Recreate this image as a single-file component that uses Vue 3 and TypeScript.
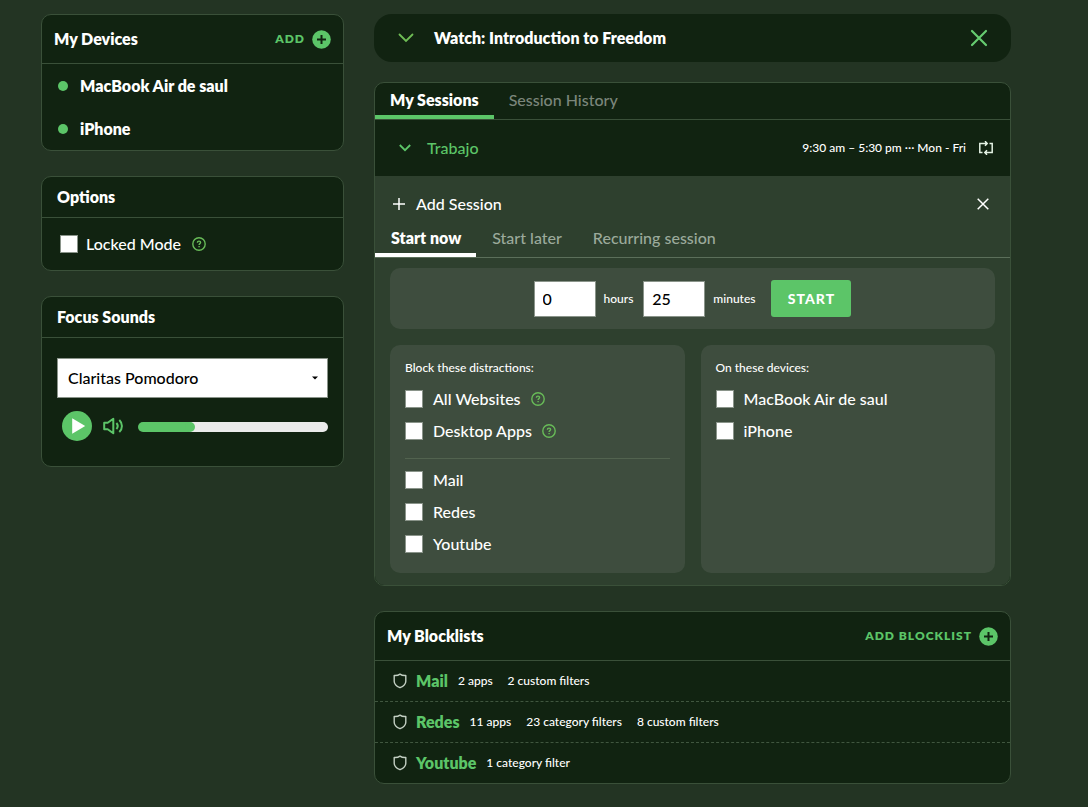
<script setup lang="ts">
import { computed, ref } from 'vue'

interface Choice {
  id: string
  label: string
  help?: boolean
}

interface Blocklist {
  name: string
  details: string[]
}

const devices: Choice[] = [
  { id: 'macbook', label: 'MacBook Air de saul' },
  { id: 'iphone', label: 'iPhone' },
]

const generalBlocks: Choice[] = [
  { id: 'websites', label: 'All Websites', help: true },
  { id: 'apps', label: 'Desktop Apps', help: true },
]

const listBlocks: Choice[] = [
  { id: 'mail', label: 'Mail' },
  { id: 'redes', label: 'Redes' },
  { id: 'youtube', label: 'Youtube' },
]

const blocklists: Blocklist[] = [
  { name: 'Mail', details: ['2 apps', '2 custom filters'] },
  { name: 'Redes', details: ['11 apps', '23 category filters', '8 custom filters'] },
  { name: 'Youtube', details: ['1 category filter'] },
]

const mainTabs = ['My Sessions', 'Session History']
const startTabs = ['Start now', 'Start later', 'Recurring session']
const mainTab = ref('My Sessions')
const startTab = ref('Start now')

const locked = ref(false)
const blocked = ref<string[]>([])
const targets = ref<string[]>([])
const sound = ref('Claritas Pomodoro')
const hours = ref('0')
const minutes = ref('25')
const volume = ref(26)
const volumeFill = computed(() => ({ '--level': volume.value / 100 }))
</script>

<template>
  <div class="page">
    <aside class="column">
      <section class="card">
        <header class="card-head tall">
          <h2>My Devices</h2>
          <button class="add" type="button">
            ADD
            <svg width="19" height="19" viewBox="0 0 19 19" aria-hidden="true">
              <circle cx="9.5" cy="9.5" r="9.3" fill="#5cc568" />
              <path d="M9.5 5v9M5 9.5h9" stroke="#112311" stroke-width="2" />
            </svg>
          </button>
        </header>
        <ul class="devices">
          <li v-for="device in devices" :key="device.id"><span class="dot"></span>{{ device.label }}</li>
        </ul>
      </section>

      <section class="card">
        <header class="card-head"><h2>Options</h2></header>
        <div class="locked">
          <label><input v-model="locked" type="checkbox" class="check" />Locked Mode</label>
          <button class="icon-button" type="button" aria-label="About Locked Mode">
            <svg class="help" width="14" height="14" viewBox="0 0 14 14" aria-hidden="true">
              <circle cx="7" cy="7" r="6.2" />
              <path d="M5.4 5.7c0-1 .7-1.600 1.600-1.600s1.600.6 1.600 1.400c0 1.100-1.500 1.200-1.500 2.400M7.100 9v1.200" />
            </svg>
          </button>
        </div>
      </section>

      <section class="card">
        <header class="card-head"><h2>Focus Sounds</h2></header>
        <div class="sounds">
          <div class="select-wrap">
            <select v-model="sound" aria-label="Focus sound">
              <option>Claritas Pomodoro</option>
            </select>
            <svg class="caret" width="6" height="4" viewBox="0 0 6 4" aria-hidden="true">
              <path d="M0 .4h6L3 3.6z" fill="#000" />
            </svg>
          </div>
          <div class="player">
            <button class="icon-button" type="button" aria-label="Play">
              <svg width="30" height="30" viewBox="0 0 30 30" aria-hidden="true">
                <circle cx="15" cy="15" r="15" fill="#5cc568" />
                <path d="M10.2 7.3v15.4L23.2 15z" fill="#fff" />
              </svg>
            </button>
            <button class="icon-button speaker" type="button" aria-label="Mute">
              <svg width="21" height="18" viewBox="0 0 21 18" fill="none" stroke="#5cc568" stroke-width="2" aria-hidden="true">
                <path d="M1.200 5.800h3.500L10.300 1.800v14.400l-5.600-4H1.200z" stroke-linejoin="round" />
                <path d="M13.400 6c1.500 1.700 1.500 4.300 0 6M16.300 3c3.500 3.300 3.500 8.700 0 12" />
              </svg>
            </button>
            <input v-model.number="volume" class="volume" type="range" min="0" max="100" aria-label="Volume" :style="volumeFill" />
          </div>
        </div>
      </section>
    </aside>

    <main class="column">
      <section class="banner">
        <button class="icon-button" type="button" aria-label="Expand video">
          <svg width="16" height="10" viewBox="0 0 16 10" aria-hidden="true">
            <path d="M1.500 1.500 8 8l6.500-6.500" fill="none" stroke="#6fbd55" stroke-width="1.8" stroke-linecap="round" />
          </svg>
        </button>
        <h2>Watch: Introduction to Freedom</h2>
        <button class="icon-button" type="button" aria-label="Dismiss video">
          <svg width="18" height="18" viewBox="0 0 18 18" aria-hidden="true">
            <path d="m2 2 14 14M16 2 2 16" fill="none" stroke="#66cc70" stroke-width="2.2" stroke-linecap="round" />
          </svg>
        </button>
      </section>

      <section class="card">
        <nav class="tabs main-tabs" aria-label="Sessions">
          <button v-for="tab in mainTabs" :key="tab" type="button" :class="{ active: tab === mainTab }" @click="mainTab = tab">
            {{ tab }}
          </button>
        </nav>
        <div class="session">
          <button class="session-name" type="button">
            <svg width="12" height="8" viewBox="0 0 12 8" aria-hidden="true">
              <path d="m.8 1 5.200 5.200L11.200 1" fill="none" stroke="#5cc568" stroke-width="1.8" />
            </svg>
            Trabajo
          </button>
          <span class="session-time">9:30 am – 5:30 pm ··· Mon - Fri</span>
          <svg width="14" height="14" viewBox="0 0 14 14" aria-hidden="true">
            <path
              d="M3.500 11.500H.8v-9h6.700M10.500 2.500h2.700v9H6.500M6 .2l2.200 2.300L6 4.800M8 9.200l-2.200 2.300L8 13.800"
              fill="none"
              stroke="#e4f2e4"
              stroke-width="1.5"
            />
          </svg>
        </div>

        <div class="add-panel">
          <header class="add-head">
            <svg width="12" height="12" viewBox="0 0 12 12" aria-hidden="true">
              <path d="M6 0v12M0 6h12" stroke="#fff" stroke-width="1.5" />
            </svg>
            <h3>Add Session</h3>
            <button class="icon-button" type="button" aria-label="Close">
              <svg width="12" height="12" viewBox="0 0 12 12" aria-hidden="true">
                <path d="m.7.7 10.600 10.600M11.300.7.7 11.300" stroke="#fff" stroke-width="1.5" />
              </svg>
            </button>
          </header>
          <nav class="tabs start-tabs" aria-label="Session type">
            <button v-for="tab in startTabs" :key="tab" type="button" :class="{ active: tab === startTab }" @click="startTab = tab">
              {{ tab }}
            </button>
          </nav>

          <form class="add-body" @submit.prevent>
            <div class="box duration">
              <input id="hours" v-model="hours" type="text" inputmode="numeric" />
              <label for="hours">hours</label>
              <input id="minutes" v-model="minutes" type="text" inputmode="numeric" />
              <label for="minutes">minutes</label>
              <button class="start" type="submit">START</button>
            </div>
            <fieldset class="box">
              <p>Block these distractions:</p>
              <div v-for="item in generalBlocks" :key="item.id" class="choice">
                <label><input v-model="blocked" type="checkbox" class="check" :value="item.id" />{{ item.label }}</label>
                <button v-if="item.help" class="icon-button" type="button" :aria-label="`About ${item.label}`">
                  <svg class="help" width="14" height="14" viewBox="0 0 14 14" aria-hidden="true">
                    <circle cx="7" cy="7" r="6.2" />
                    <path d="M5.4 5.700c0-1 .7-1.600 1.600-1.600s1.600.6 1.600 1.400c0 1.100-1.500 1.200-1.500 2.400M7.100 9v1.200" />
                  </svg>
                </button>
              </div>
              <hr />
              <div v-for="item in listBlocks" :key="item.id" class="choice">
                <label><input v-model="blocked" type="checkbox" class="check" :value="item.id" />{{ item.label }}</label>
              </div>
            </fieldset>
            <fieldset class="box">
              <p>On these devices:</p>
              <div v-for="item in devices" :key="item.id" class="choice">
                <label><input v-model="targets" type="checkbox" class="check" :value="item.id" />{{ item.label }}</label>
              </div>
            </fieldset>
          </form>
        </div>
      </section>

      <section class="card">
        <header class="card-head tall">
          <h2>My Blocklists</h2>
          <button class="add" type="button">
            ADD BLOCKLIST
            <svg width="19" height="19" viewBox="0 0 19 19" aria-hidden="true">
              <circle cx="9.5" cy="9.5" r="9.3" fill="#5cc568" />
              <path d="M9.5 5v9M5 9.5h9" stroke="#112311" stroke-width="2" />
            </svg>
          </button>
        </header>
        <ul class="blocklists">
          <li v-for="list in blocklists" :key="list.name">
            <svg width="14" height="16" viewBox="0 0 14 16" aria-hidden="true">
              <path
                d="M7 1.100C5.400 2.300 3.400 2.700 1.200 2.500v5.700c0 3 2.200 5 5.800 6.500 3.600-1.500 5.800-3.500 5.800-6.500V2.500C10.600 2.700 8.600 2.300 7 1.100z"
                fill="none"
                stroke="#c3cfc3"
                stroke-width="1.4"
                stroke-linejoin="round"
              />
            </svg>
            <a href="#">{{ list.name }}</a>
            <span v-for="detail in list.details" :key="detail">{{ detail }}</span>
          </li>
        </ul>
      </section>
    </main>
  </div>
</template>

<style>
body {
  margin: 0;
  background: #233423;
}
</style>

<style scoped>
.page {
  display: grid;
  grid-template-columns: 303px minmax(0, 1fr);
  gap: 30px;
  align-items: start;
  padding: 14px 77px 23px 41px;
  color: #fff;
  font: 500 16px/20px Lato, 'Liberation Sans', sans-serif;
}

.page *,
.page *::before {
  box-sizing: border-box;
}

.column {
  display: grid;
  gap: 25px;
}

main.column {
  grid-template-columns: minmax(0, 1fr);
}

h2,
h3,
p,
ul,
fieldset {
  margin: 0;
  padding: 0;
  border: 0;
  font-size: 16px;
  list-style: none;
}

h2 {
  font-weight: 800;
}

h3 {
  font-weight: 500;
}

button {
  padding: 0;
  border: 0;
  background: none;
  color: inherit;
  font: inherit;
  cursor: pointer;
}

svg {
  flex: none;
  display: block;
}

.icon-button {
  display: flex;
}

.card {
  overflow: hidden;
  border: 1px solid #3a5039;
  border-radius: 10px;
  background: #112311;
}

.card-head {
  display: flex;
  align-items: center;
  justify-content: space-between;
  height: 41px;
  padding: 0 15px;
  border-bottom: 1px solid #3a5039;
}

.card-head.tall {
  height: 49px;
  padding: 0 12px;
}

.add {
  display: flex;
  align-items: center;
  gap: 7px;
  color: #5cc568;
  font-size: 12px;
  font-weight: 800;
  letter-spacing: 1px;
}

.devices li {
  display: flex;
  align-items: center;
  gap: 12px;
  height: 43px;
  padding: 0 16px;
  font-weight: 800;
}

.dot {
  width: 10px;
  height: 10px;
  border-radius: 50%;
  background: #5cc568;
}

.locked {
  display: flex;
  align-items: center;
  gap: 11px;
  height: 52px;
  padding: 0 18px;
}

.locked label {
  display: flex;
  align-items: center;
  gap: 8px;
}

.check {
  appearance: none;
  flex: none;
  width: 18px;
  height: 18px;
  margin: 0;
  border: 1px solid #8a948a;
  background: #fff;
}

.check:checked {
  background: #5cc568;
}

.help {
  fill: none;
  stroke: #68bb58;
  stroke-width: 1.4;
}

.sounds {
  padding: 20px 15px 25px;
}

.select-wrap {
  position: relative;
}

select {
  appearance: none;
  display: block;
  width: 100%;
  height: 40px;
  padding: 0 10px;
  border: 1px solid #8a948a;
  border-radius: 0;
  background: #fff;
  color: #000;
  font: inherit;
}

.caret {
  position: absolute;
  top: 18px;
  right: 10px;
  pointer-events: none;
}

.player {
  display: flex;
  align-items: center;
  margin: 13px 0 0 5px;
}

.speaker {
  margin: 0 14px 0 11px;
}

.volume {
  appearance: none;
  flex: 1;
  min-width: 0;
  height: 10px;
  margin: 2px 0 0;
  border-radius: 5px;
  background: linear-gradient(#5cc568, #5cc568) 0 / calc(5px + var(--level) * (100% - 10px)) 100% no-repeat #ebebeb;
}

.volume::-webkit-slider-thumb {
  appearance: none;
  width: 10px;
  height: 10px;
  border-radius: 50%;
  background: #5cc568;
}

.banner {
  display: flex;
  align-items: center;
  height: 48px;
  margin-bottom: -5px;
  padding: 0 23px 0 24px;
  border-radius: 18px;
  background: #112311;
}

.banner h2 {
  flex: 1;
  padding-left: 20px;
}

.tabs {
  display: flex;
  border-bottom: 1px solid #3a5039;
}

.tabs button {
  border-bottom: 4px solid transparent;
  color: #7b867b;
}

.tabs button.active {
  border-color: #5cc568;
  color: #fff;
  font-weight: 800;
}

.main-tabs {
  height: 37px;
}

.main-tabs button {
  padding: 2px 15px 0;
}

.session {
  display: flex;
  align-items: center;
  justify-content: space-between;
  height: 56px;
  padding: 0 17px 0 24px;
}

.session-name {
  display: flex;
  align-items: center;
  gap: 16px;
  color: #5cc568;
}

.session-time {
  margin: 0 13px 0 auto;
  font-size: 12px;
}

.add-panel {
  background: #2e402e;
}

.add-head {
  display: flex;
  align-items: center;
  gap: 11px;
  height: 44px;
  padding: 12px 21px 0 18px;
}

.add-head h3 {
  flex: 1;
}

.start-tabs {
  height: 38px;
  border-color: #5b6f5a;
}

.start-tabs button {
  padding: 2px 15px 0 16px;
  color: #9baa9b;
}

.start-tabs button.active {
  border-color: #fff;
}

.add-body {
  display: grid;
  grid-template-columns: repeat(2, minmax(0, 1fr));
  gap: 16px;
  padding: 10px 15px 12px;
}

.box {
  min-width: 0;
  padding: 15px 15px 13px;
  border-radius: 10px;
  background: #3e4d3e;
}

.box.duration {
  grid-column: 1 / -1;
  display: flex;
  align-items: center;
  justify-content: center;
  gap: 8px;
  padding: 12px;
  font-size: 12px;
}

.duration input {
  width: 62px;
  height: 36px;
  padding: 0 8px;
  border: 1px solid #8a948a;
  background: #fff;
  color: #000;
  font: 500 16px/20px Lato, 'Liberation Sans', sans-serif;
}

.duration label:first-of-type {
  margin-right: 2px;
}

.start {
  width: 80px;
  height: 37px;
  margin-left: 8px;
  border-radius: 3px;
  background: #5cc568;
  font-size: 14px;
  font-weight: 900;
  letter-spacing: 1px;
}

.box p {
  margin-bottom: 7px;
  font-size: 12px;
  line-height: 16px;
}

.choice {
  display: flex;
  align-items: center;
  gap: 10px;
  height: 32px;
}

.choice label {
  display: flex;
  align-items: center;
  gap: 10px;
}

hr {
  height: 1px;
  margin: 11px 0 5px;
  border: 0;
  background: #52634f;
}

.blocklists li {
  display: flex;
  align-items: center;
  height: 41px;
  padding: 0 18px;
}

.blocklists li + li {
  border-top: 1px dashed #40563f;
}

.blocklists li:first-child {
  height: 40px;
}

.blocklists a {
  margin: 0 10px 0 9px;
  color: #5cc568;
  font-weight: 800;
  text-decoration: none;
}

.blocklists span {
  margin-right: 15px;
  font-size: 12px;
}
</style>
